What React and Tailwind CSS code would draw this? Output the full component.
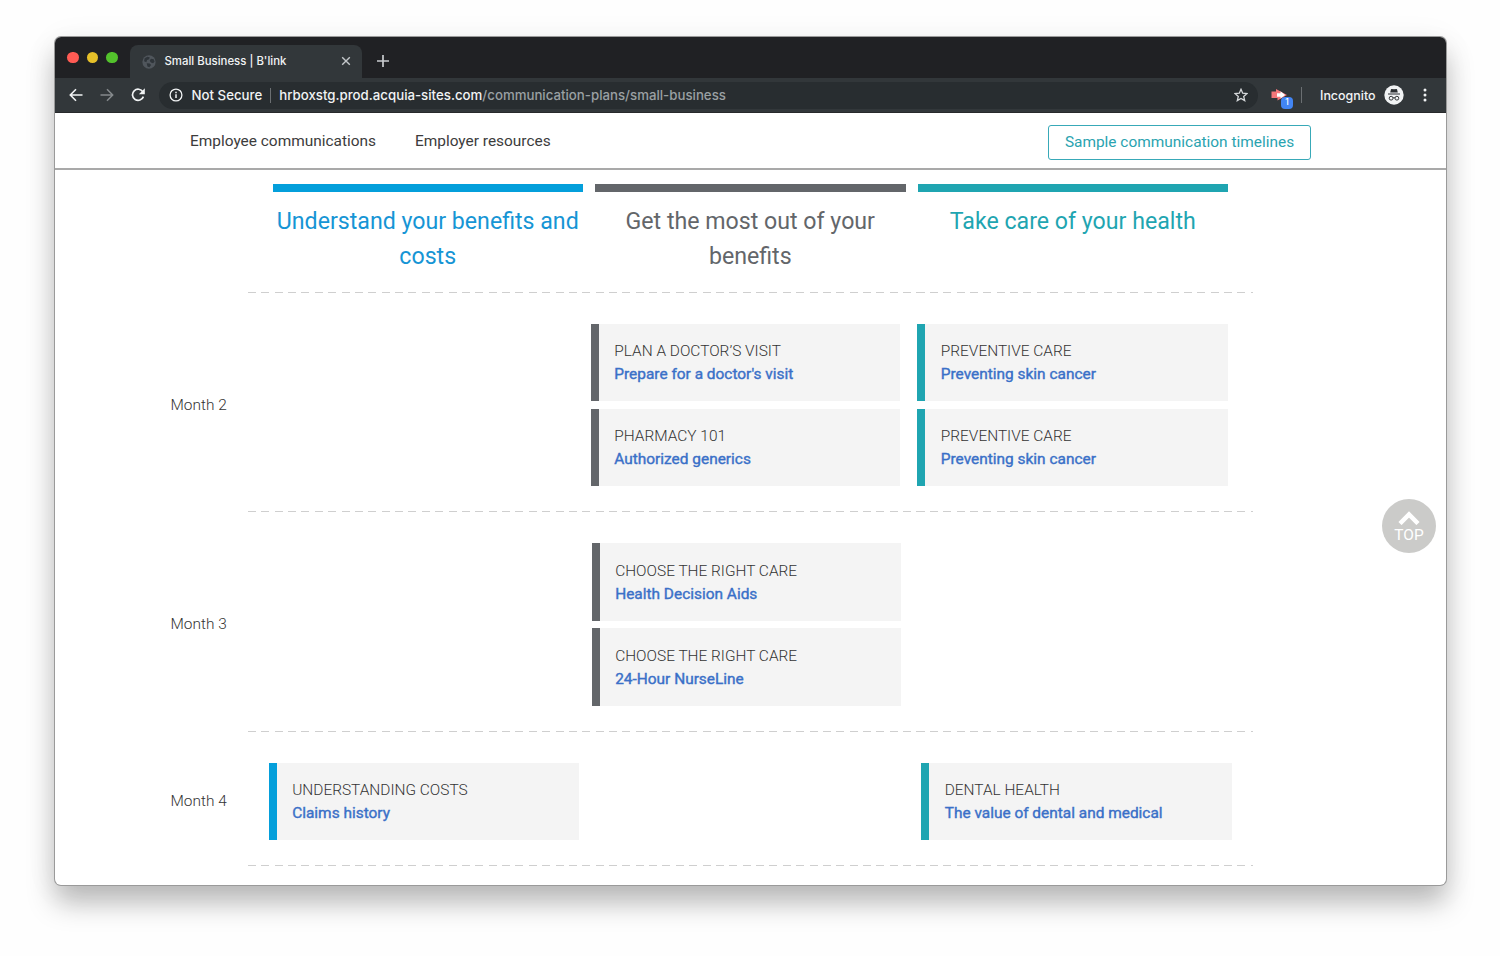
function Favicon() {
  return (
    <svg viewBox="0 0 16 16" className="h-[14px] w-[14px]">
      <circle cx="8" cy="8" r="7.6" fill="#50565c" />
      <path d="M3 3.6 6.2 2l2.6.6-.6 2.2-2.4 1L5 8.2l-2.6-1Z" fill="#2f353a" />
      <path d="m10.2 4.4 3.2.4 1 2.8-1.8 1.8-2.4-.8-1.4-2Z" fill="#2f353a" />
      <path d="m5.4 9.4 3.4.2 1.6 1.8-2 2.6-2.2-.8Z" fill="#2f353a" />
    </svg>
  );
}

function TabStrip() {
  return (
    <div className="flex h-[41px] items-end bg-[#202124]">
      <div className="flex h-full w-[75px] items-center gap-2 pl-3">
        <span className="h-[11.5px] w-[11.5px] rounded-full bg-[#ff5b54]" />
        <span className="h-[11.5px] w-[11.5px] rounded-full bg-[#e6c029]" />
        <span className="h-[11.5px] w-[11.5px] rounded-full bg-[#53c22c]" />
      </div>
      <div className="flex h-[33px] w-[232px] items-center rounded-t-lg bg-[#32373a] pl-3 pr-[11px]">
        <Favicon />
        <span className="ml-[8.5px] flex-1 whitespace-nowrap text-[11.4px] font-medium text-[#f1f3f4]">
          Small Business | B'link
        </span>
        <svg viewBox="0 0 10 10" className="mb-px h-[10px] w-[10px]" stroke="#c3c7ca" strokeWidth="1.4">
          <path d="m1.2 1.2 7.6 7.6M8.8 1.2 1.2 8.8" />
        </svg>
      </div>
      <div className="flex h-[33px] items-center pb-[2px] pl-[15px]">
        <svg viewBox="0 0 12 12" className="h-3 w-3" stroke="#c9cccf" strokeWidth="1.7">
          <path d="M6 0v12M0 6h12" />
        </svg>
      </div>
    </div>
  );
}

function Toolbar() {
  return (
    <div className="flex h-[35px] items-center border-b border-[#27292b] bg-[#32373a] pl-[13.5px] text-[13.26px] font-medium text-[#f1f3f4]">
      <svg viewBox="0 0 14 14" className="h-[14px] w-[14px]" fill="none" stroke="#f1f3f4" strokeWidth="1.6">
        <path d="M13.5 7H1.6M7 1.3 1.3 7 7 12.7" />
      </svg>
      <svg viewBox="0 0 14 14" className="ml-[17px] h-[14px] w-[14px]" fill="none" stroke="#85898c" strokeWidth="1.5">
        <path d="M.5 7h11.9M7 1.3 12.7 7 7 12.7" />
      </svg>
      <svg viewBox="0 0 14 14" className="ml-[17px] h-[14px] w-[14px]" fill="none" stroke="#f1f3f4" strokeWidth="1.7">
        <path d="M11.9 3.9A5.6 5.6 0 1 0 12.4 8.6" />
        <path d="M13.8.3v5.9H7.9Z" fill="#f1f3f4" stroke="none" />
      </svg>
      <div className="ml-[14px] flex h-[27px] w-[1099px] items-center rounded-full bg-[#282d30] pl-[10.5px] pr-[10px]">
        <svg viewBox="0 0 14 14" className="h-[14px] w-[14px]" fill="none" stroke="#f1f3f4" strokeWidth="1.3">
          <circle cx="7" cy="7" r="5.9" />
          <path d="M7 6.3v3.8M7 3.8v1.5" strokeWidth="1.5" />
        </svg>
        <span className="ml-[8.5px] whitespace-nowrap pt-[2px]">Not Secure</span>
        <span className="ml-2 mr-2 h-[15px] w-px bg-[#6b6f72]" />
        <span className="flex-1 whitespace-nowrap pt-[2px]">
          hrboxstg.prod.acquia-sites.com
          <span className="text-[#9aa0a3]">/communication-plans/small-business</span>
        </span>
        <svg viewBox="0 0 14 14" className="h-[14px] w-[14px]" fill="none" stroke="#d5d8da" strokeWidth="1.3">
          <path d="m7 1.3 1.7 3.9 4.3.4-3.3 2.8 1 4.2L7 10.4l-3.7 2.2 1-4.2L1 5.6l4.3-.4Z" />
        </svg>
      </div>
      <div className="relative ml-[13px] h-[22px] w-[22px]">
        <svg viewBox="0 0 22 22" className="h-[22px] w-[22px]">
          <path d="M.5 7.500H5V5L16 11 6.500 16.500V14H.5Z" fill="#f4777a" />
          <path d="M6 9.200h3.500V7.300l4.700 3.700-4.700 3.500v-1.800H6Z" fill="#fff" />
        </svg>
        <span className="absolute left-[10.500px] top-[12.500px] flex h-[12px] w-[12px] items-center justify-center rounded-sm bg-[#4285f4] text-[8.500px] leading-none text-white">
          1
        </span>
      </div>
      <span className="ml-[8px] h-4 w-px bg-[#6b6f72]" />
      <span className="ml-[18.500px] pt-[2px] text-[12.45px]">Incognito</span>
      <svg viewBox="0 0 20 20" className="ml-2 h-5 w-5">
        <circle cx="10" cy="10" r="9.700" fill="#f1f3f4" />
        <path d="m7 4.300.5-.4 2.500.4 2.500-.4.5.4.8 3.300H6.200Z" fill="#2b2f32" />
        <path d="M4 8.500h12v1.100H4Z" fill="#2b2f32" />
        <g fill="none" stroke="#2b2f32" strokeWidth=".95">
          <circle cx="7.100" cy="13.200" r="1.900" />
          <circle cx="12.900" cy="13.200" r="1.900" />
          <path d="M9 13q1-.8 2 0" />
        </g>
      </svg>
      <svg viewBox="0 0 4 14" className="ml-[19px] h-[14px] w-1" fill="#f1f3f4">
        <circle cx="2" cy="2" r="1.500" />
        <circle cx="2" cy="7" r="1.500" />
        <circle cx="2" cy="12" r="1.500" />
      </svg>
    </div>
  );
}

function SiteNav() {
  return (
    <nav className="flex h-[57px] items-center border-b-2 border-[#a9a9a9] pl-[135px] pr-[135px] text-[15.43px] text-[#3c3c3c]">
      <a className="mr-[39px] mt-[3px]">Employee communications</a>
      <a className="mt-[3px] flex-1">Employer resources</a>
      <a className="mt-[4px] flex h-[35px] w-[263px] items-center justify-center rounded-[3px] border border-[#38a9b8] text-[#2aa3b0]">
        Sample communication timelines
      </a>
    </nav>
  );
}

function ColumnHeading({ tone, children }) {
  return (
    <h2 className={`w-[310.500px] border-t-8 pt-[11.500px] text-center text-[23.16px] leading-[35px] ${tone}`}>{children}</h2>
  );
}

function Divider() {
  return (
    <div className="ml-[193px] h-px w-[1005px] bg-[repeating-linear-gradient(90deg,#cfcfcf_0_8px,transparent_8px_13.370px)]" />
  );
}

const EDGES = {
  blue: "border-[#049fdb]",
  gray: "border-[#63666a]",
  teal: "border-[#1fa5b1]",
};

function Card({ edge, topic, title }) {
  return (
    <div className={`h-[77.5px] w-full border-l-8 bg-[#f4f4f4] pl-[15.700px] pt-[16.300px] ${EDGES[edge]}`}>
      <div className="text-[15.43px] font-light leading-[23px] text-[#333]">{topic}</div>
      <a className="block text-[15.43px] leading-[23px] text-[#3a70c8] [-webkit-text-stroke:0.4px_#3a70c8]">{title}</a>
    </div>
  );
}

function MonthRow({ label, grid, children }) {
  return (
    <section className="flex items-center pb-[25px] pt-[31px]">
      <div className="w-[213.500px] shrink-0 pl-[115.500px] pt-[0.900px] text-[15.43px] font-light text-[#333]">{label}</div>
      <div className={`grid ${grid}`}>{children}</div>
    </section>
  );
}

function Stack({ children }) {
  return <div className="flex flex-col gap-[7.500px]">{children}</div>;
}

export default function App() {
  return (
    <div className="h-[956px] w-[1500px] overflow-hidden bg-[#fefefe] px-[55px] pt-[37px] font-['Roboto',sans-serif]">
      <div className="relative h-[847.500px] w-[1391px] overflow-hidden rounded-[6px] bg-white shadow-[0_0_0_1px_#9a9a9a,0_18px_28px_rgba(0,0,0,0.26),0_4px_34px_rgba(0,0,0,0.06)]">
        <div className="font-['Inter',sans-serif]">
          <TabStrip />
          <Toolbar />
        </div>
        <SiteNav />
        <main className="pt-[14px]">
          <header className="flex h-[107.800px] gap-3 pl-[217.500px]">
            <ColumnHeading tone="border-[#049fdb] text-[#1695d5]">Understand your benefits and costs</ColumnHeading>
            <ColumnHeading tone="border-[#63666a] text-[#63666a]">Get the most out of your benefits</ColumnHeading>
            <ColumnHeading tone="border-[#1fa5b1] text-[#1fa5b1]">Take care of your health</ColumnHeading>
          </header>
          <Divider />
          <MonthRow label="Month 2" grid="grid-cols-[310px_309.500px_311px] gap-x-[17px] -ml-[4.900px]">
            <div />
            <Stack>
              <Card edge="gray" topic="PLAN A DOCTOR’S VISIT" title="Prepare for a doctor's visit" />
              <Card edge="gray" topic="PHARMACY 101" title="Authorized generics" />
            </Stack>
            <Stack>
              <Card edge="teal" topic="PREVENTIVE CARE" title="Preventing skin cancer" />
              <Card edge="teal" topic="PREVENTIVE CARE" title="Preventing skin cancer" />
            </Stack>
          </MonthRow>
          <Divider />
          <MonthRow label="Month 3" grid="grid-cols-[310px_309.500px_311px] gap-x-[17px] -ml-1">
            <div />
            <Stack>
              <Card edge="gray" topic="CHOOSE THE RIGHT CARE" title="Health Decision Aids" />
              <Card edge="gray" topic="CHOOSE THE RIGHT CARE" title="24-Hour NurseLine" />
            </Stack>
            <div />
          </MonthRow>
          <Divider />
          <MonthRow label="Month 4" grid="grid-cols-[310px_308.500px_311px] gap-x-[17px]">
            <Card edge="blue" topic="UNDERSTANDING COSTS" title="Claims history" />
            <div />
            <Card edge="teal" topic="DENTAL HEALTH" title="The value of dental and medical" />
          </MonthRow>
          <Divider />
        </main>
        <button className="absolute left-[1327px] top-[462px] flex h-[54px] w-[54px] flex-col items-center rounded-full bg-[#cbcbc9] pt-[12px] text-white">
          <svg viewBox="0 0 22 14" className="h-[14px] w-[22px]" fill="none" stroke="#fff" strokeWidth="4.500">
            <path d="m2 12.500 9-9 9 9" />
          </svg>
          <span className="mt-[3px] text-[15.43px] leading-[14px]">TOP</span>
        </button>
      </div>
    </div>
  );
}
